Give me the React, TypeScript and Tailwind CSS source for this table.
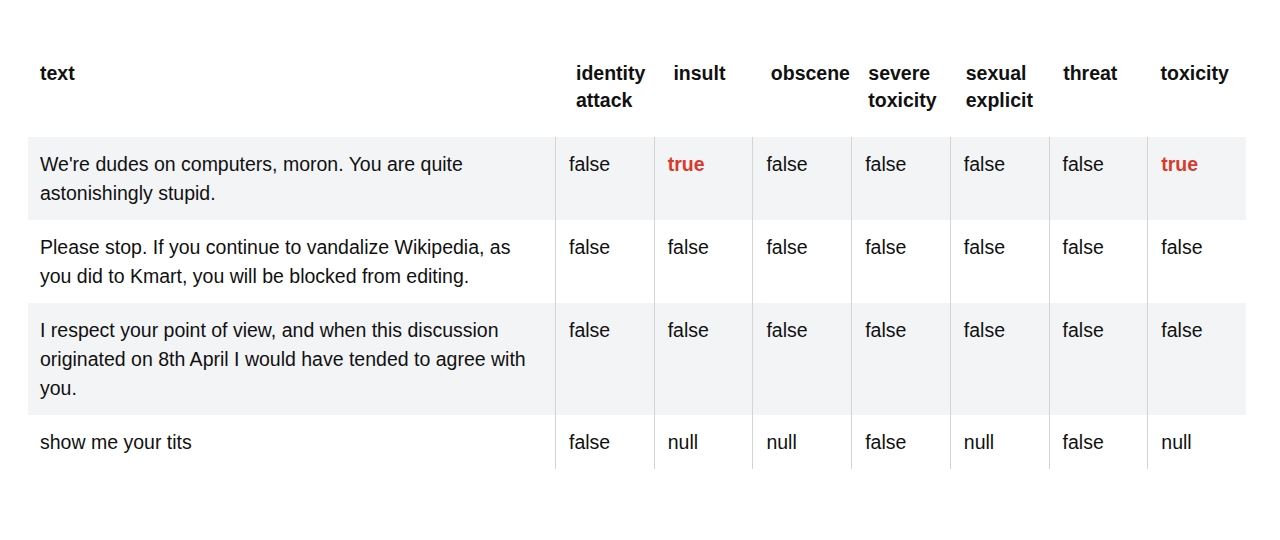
const cols = ["identity attack", "insult", "obscene", "severe toxicity", "sexual explicit", "threat", "toxicity"];

type Row = { text: string; vals: string[] };
const rows: Row[] = [
  { text: "We're dudes on computers, moron. You are quite astonishingly stupid.", vals: ["false", "true", "false", "false", "false", "false", "true"] },
  { text: "Please stop. If you continue to vandalize Wikipedia, as you did to Kmart, you will be blocked from editing.", vals: ["false", "false", "false", "false", "false", "false", "false"] },
  { text: "I respect your point of view, and when this discussion originated on 8th April I would have tended to agree with you.", vals: ["false", "false", "false", "false", "false", "false", "false"] },
  { text: "show me your tits", vals: ["false", "null", "null", "false", "null", "false", "null"] },
];

export default function App() {
  return (
    <div className="w-[1280px] h-[540px] bg-white text-[#111] pl-[28px] pr-[34px] pt-[48px]" style={{ fontFamily: '"Liberation Sans", Arial, sans-serif' }}>
      <div className="grid grid-cols-[536px_repeat(7,minmax(0,1fr))] text-[19.5px] leading-[27px] font-bold pb-[23px]">
        <div className="px-3 pt-3">text</div>
        {cols.map((c) => (
          <div key={c} className="pl-3 pt-3 whitespace-nowrap">
            {c.split(" ").map((w, i) => (
              <div key={i}>{w}</div>
            ))}
          </div>
        ))}
      </div>
      <div className="flex flex-col">
        {rows.map((r, i) => (
          <div key={i} className={`grid grid-cols-[527px_repeat(7,minmax(0,1fr))] text-[19.5px] leading-[29px] ${i % 2 === 0 ? "bg-[#f3f4f6]" : "bg-white"}`}>
            <div className="pl-3 pr-3 pt-[13px] pb-3">{r.text}</div>
            {r.vals.map((v, j) => (
              <div key={j} className={`border-l border-[#d4d4d4] pl-[13px] pr-2 pt-[13px] pb-3 ${v === "true" ? "text-[#d93a2b] font-bold" : ""}`}>
                {v}
              </div>
            ))}
          </div>
        ))}
      </div>
    </div>
  );
}
